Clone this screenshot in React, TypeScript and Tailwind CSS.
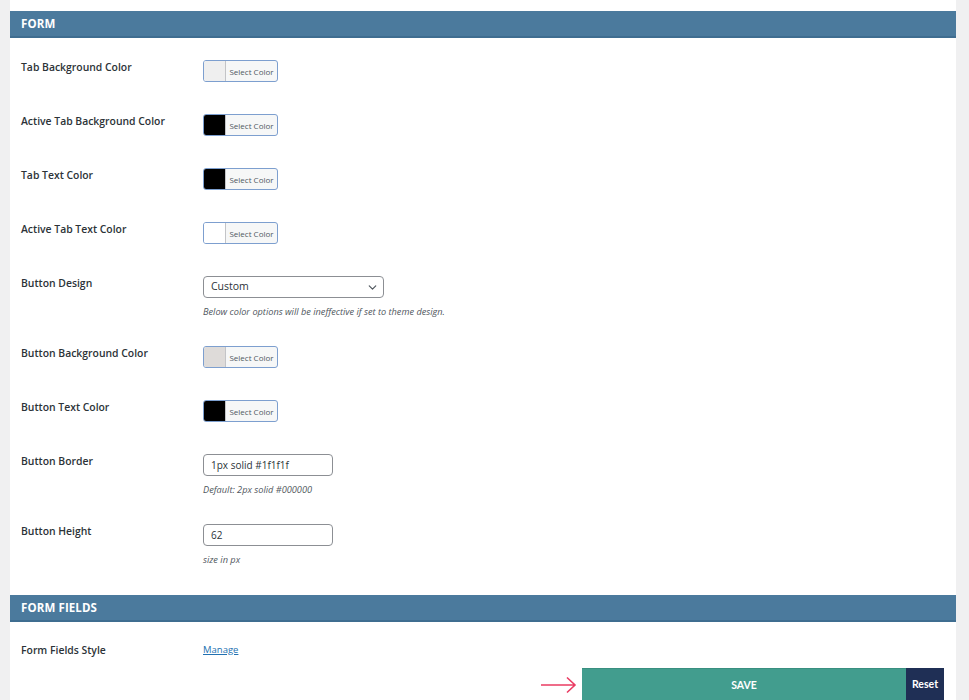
import { ChevronDown } from 'lucide-react'

type Row =
  | { kind: 'color'; label: string; swatch: string }
  | { kind: 'select'; label: string; value: string; help: string }
  | { kind: 'text'; label: string; value: string; help: string }

const formRows: Row[] = [
  { kind: 'color', label: 'Tab Background Color', swatch: 'bg-[#efefef]' },
  { kind: 'color', label: 'Active Tab Background Color', swatch: 'bg-black' },
  { kind: 'color', label: 'Tab Text Color', swatch: 'bg-black' },
  { kind: 'color', label: 'Active Tab Text Color', swatch: 'bg-white' },
  {
    kind: 'select',
    label: 'Button Design',
    value: 'Custom',
    help: 'Below color options will be ineffective if set to theme design.',
  },
  { kind: 'color', label: 'Button Background Color', swatch: 'bg-[#dedbd9]' },
  { kind: 'color', label: 'Button Text Color', swatch: 'bg-black' },
  { kind: 'text', label: 'Button Border', value: '1px solid #1f1f1f', help: 'Default: 2px solid #000000' },
  { kind: 'text', label: 'Button Height', value: '62', help: 'size in px' },
]

const rowPadding = {
  color: 'py-4',
  select: 'pt-4 pb-[11px]',
  text: 'pt-4 pb-[11px]',
}

function SectionHeader({ title }: { title: string }) {
  return (
    <div className="h-[27px] bg-[#4b7a9d] border-b-2 border-[#3f6d90] pl-[11px] flex items-center">
      <h2 className="text-[11.5px] font-bold text-white tracking-[0.01em]">{title}</h2>
    </div>
  )
}

function ColorPicker({ swatch }: { swatch: string }) {
  return (
    <button className="flex h-[22px] w-[75px] rounded-[3px] border border-[#7d9fcf] overflow-hidden bg-[#f6f7f7]">
      <span className={`w-[22px] h-full border-r border-[#c3c4c7] ${swatch}`} />
      <span className="flex-1 flex items-center justify-center text-[8px] text-[#50575e] pt-px">
        Select Color
      </span>
    </button>
  )
}

function Help({ text }: { text: string }) {
  return <p className="mt-[7px] text-[9.2px] leading-[14px] italic text-[#50575e]">{text}</p>
}

function Label({ text }: { text: string }) {
  return (
    <div className="w-[193px] shrink-0 pl-[11px] text-[10.4px] font-semibold text-[#2c3338] leading-[16px] -mt-[1px]">
      {text}
    </div>
  )
}

function FieldRow({ row }: { row: Row }) {
  return (
    <div className={`flex ${rowPadding[row.kind]}`}>
      <Label text={row.label} />
      <div>
        {row.kind === 'color' && <ColorPicker swatch={row.swatch} />}
        {row.kind === 'select' && (
          <>
            <div className="flex items-center justify-between h-[22px] w-[181px] rounded-[4px] border border-[#8c8f94] bg-white pl-[7px] pr-[4px]">
              <span className="text-[10.5px] text-[#2c3338]">{row.value}</span>
              <ChevronDown className="h-[13px] w-[13px] text-[#50575e]" strokeWidth={2.2} />
            </div>
            <Help text={row.help} />
          </>
        )}
        {row.kind === 'text' && (
          <>
            <div className="flex items-center h-[22px] w-[130px] rounded-[4px] border border-[#8c8f94] bg-white pl-[7px]">
              <span className="text-[10px] text-[#2c3338]">{row.value}</span>
            </div>
            <Help text={row.help} />
          </>
        )}
      </div>
    </div>
  )
}

export default function App() {
  return (
    <div className="min-h-[700px] bg-[#f0f0f1] font-['Open_Sans',sans-serif]">
      <div className="ml-[10px] w-[946px] h-[700px] bg-white pt-[11px] overflow-hidden">
        <SectionHeader title="FORM" />
        <div className="pt-[6px]">
          {formRows.map((row) => (
            <FieldRow key={row.label} row={row} />
          ))}
        </div>
        <div className="mt-[17px]">
          <SectionHeader title="FORM FIELDS" />
        </div>
        <div className="flex pt-[21px]">
          <Label text="Form Fields Style" />
          <a href="#" className="text-[9.5px] text-[#2271b1] underline leading-[16px] -mt-[1px]">
            Manage
          </a>
        </div>
        <div className="flex items-center justify-end pr-[12px] mt-[10px]">
          <svg width="38" height="18" viewBox="0 0 38 18" className="mr-[4px]" fill="none">
            <path d="M1 9H35M27 1.5L35 9L27 16.5" stroke="#ea3c63" strokeWidth="1.6" />
          </svg>
          <button className="h-[34px] w-[324px] bg-[#429d8e] border-t border-[#3a8f80] text-white text-[10.5px] font-bold font-['Lato',sans-serif]">
            SAVE
          </button>
          <button className="h-[34px] w-[38px] bg-[#1f2f55] text-white text-[10.5px] font-bold font-['Lato',sans-serif]">
            Reset
          </button>
        </div>
      </div>
    </div>
  )
}
